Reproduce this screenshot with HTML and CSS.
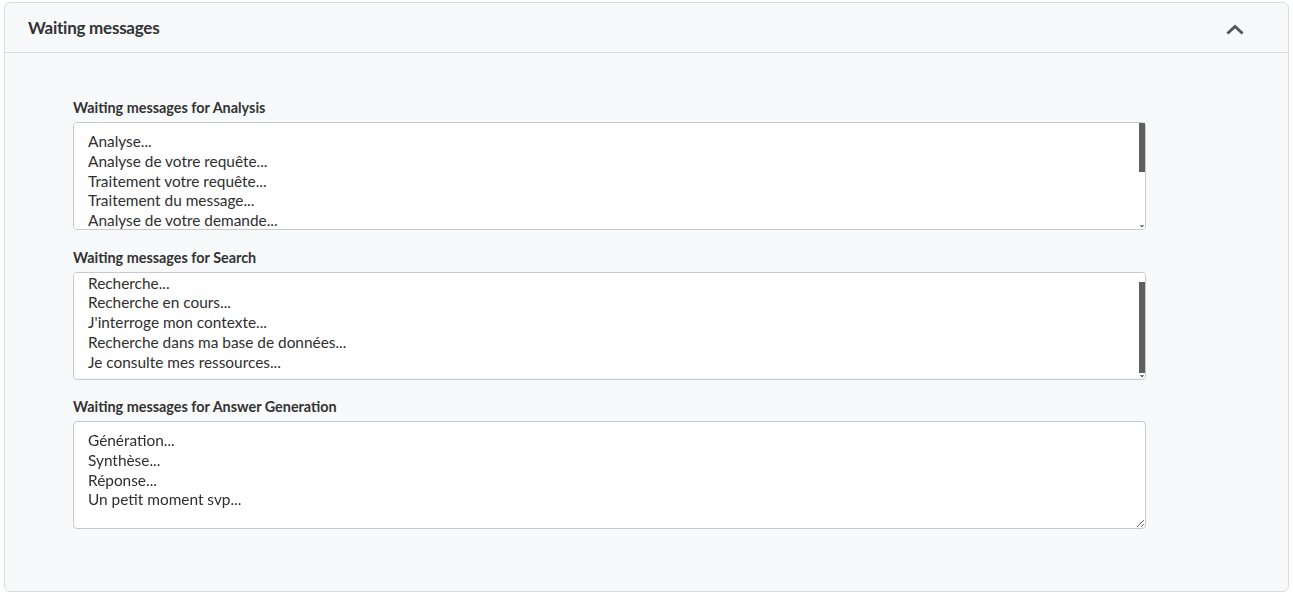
FILE: index.html
```html
<!DOCTYPE html>
<html lang="fr">
<head>
<meta charset="utf-8">
<title>Waiting messages</title>
<link rel="stylesheet" href="styles.css">
</head>
<body>
<section class="card">
  <header class="card-header">
    <h2 class="card-title">Waiting messages</h2>
    <button class="collapse-btn" type="button" aria-label="Collapse">
      <svg width="18" height="12" viewBox="0 0 18 12"><polyline points="2.5,9.5 9,3.5 15.5,9.5" fill="none" stroke="#555" stroke-width="3" stroke-linecap="square" stroke-linejoin="miter"/></svg>
    </button>
  </header>
  <div class="card-body">
    <div class="field">
      <label class="field-label" for="ta-analysis">Waiting messages for Analysis</label>
      <div class="input-wrap">
        <textarea id="ta-analysis" class="field-input has-scroll">Analyse...
Analyse de votre requête...
Traitement votre requête...
Traitement du message...
Analyse de votre demande...
Compréhension de votre question...
Je réfléchis...
Lecture de votre message...
Interprétation en cours...
Un instant...</textarea>
        <span class="scroll-thumb thumb-analysis"></span>
        <span class="scroll-corner"></span>
      </div>
    </div>
    <div class="field">
      <label class="field-label" for="ta-search">Waiting messages for Search</label>
      <div class="input-wrap">
        <textarea id="ta-search" class="field-input has-scroll scrolled">Recherche...
Recherche en cours...
J'interroge mon contexte...
Recherche dans ma base de données...
Je consulte mes ressources...</textarea>
        <span class="scroll-thumb thumb-search"></span>
        <span class="scroll-corner"></span>
      </div>
    </div>
    <div class="field">
      <label class="field-label" for="ta-answer">Waiting messages for Answer Generation</label>
      <div class="input-wrap">
        <textarea id="ta-answer" class="field-input">Génération...
Synthèse...
Réponse...
Un petit moment svp...</textarea>
      </div>
    </div>
  </div>
</section>
<script src="script.js"></script>
</body>
</html>
```

FILE: styles.css
```css
html, body {
  background: #ffffff;
}
body {
  margin: 2px 4px;
  font-family: Lato, "Open Sans", sans-serif;
  color: #333333;
}
.card {
  border: 1px solid #dddddd;
  border-radius: 6px;
  background: #f8f9fb;
  box-sizing: border-box;
}
.card-header {
  display: flex;
  align-items: center;
  justify-content: space-between;
  height: 49px;
  padding: 0 44px 0 23px;
  border-bottom: 1px solid #dedede;
}
.card-title {
  margin: 0;
  font-size: 17px;
  font-weight: 700;
  color: #333333;
  letter-spacing: -0.25px;
}
.collapse-btn {
  border: 0;
  background: transparent;
  padding: 0;
  display: flex;
  align-items: center;
  margin-top: 2px;
}
.card-body {
  padding: 44px 0 62px 68px;
  display: flex;
  flex-direction: column;
  gap: 16.5px;
}
.field {
  display: flex;
  flex-direction: column;
  gap: 4px;
}
.field-label {
  font-size: 14.4px;
  font-weight: 700;
  line-height: 21px;
  color: #333333;
}
.input-wrap {
  position: relative;
  width: 1073px;
}
.field-input {
  display: block;
  width: 1073px;
  height: 108px;
  box-sizing: border-box;
  margin: 0;
  padding: 9px 14px 6px;
  border: 1px solid #c9c9c9;
  border-radius: 4px;
  background: #ffffff;
  font-family: Lato, "Open Sans", sans-serif;
  font-size: 15.4px;
  line-height: 19.75px;
  color: #2f2f2f;
  resize: vertical;
  outline: none;
}
.field-input.has-scroll {
  resize: none;
}
.scroll-thumb {
  position: absolute;
  right: 1px;
  width: 6px;
  background: #5f5f5f;
}
.thumb-analysis {
  top: 1px;
  height: 49px;
}
.thumb-search {
  top: 10px;
  height: 91px;
}
.scroll-corner {
  position: absolute;
  right: 2px;
  bottom: 2px;
  width: 4px;
  height: 3px;
  border-top: 1px solid #888;
  box-sizing: border-box;
  background: #ffffff;
}
.scroll-corner::after {
  content: "";
  position: absolute;
  left: 1px;
  top: 0;
  width: 2px;
  height: 1px;
  background: #666;
}
```

FILE: script.js
```js
document.querySelectorAll('.scrolled').forEach(function (el) {
  el.scrollTop = el.scrollHeight;
});
```
